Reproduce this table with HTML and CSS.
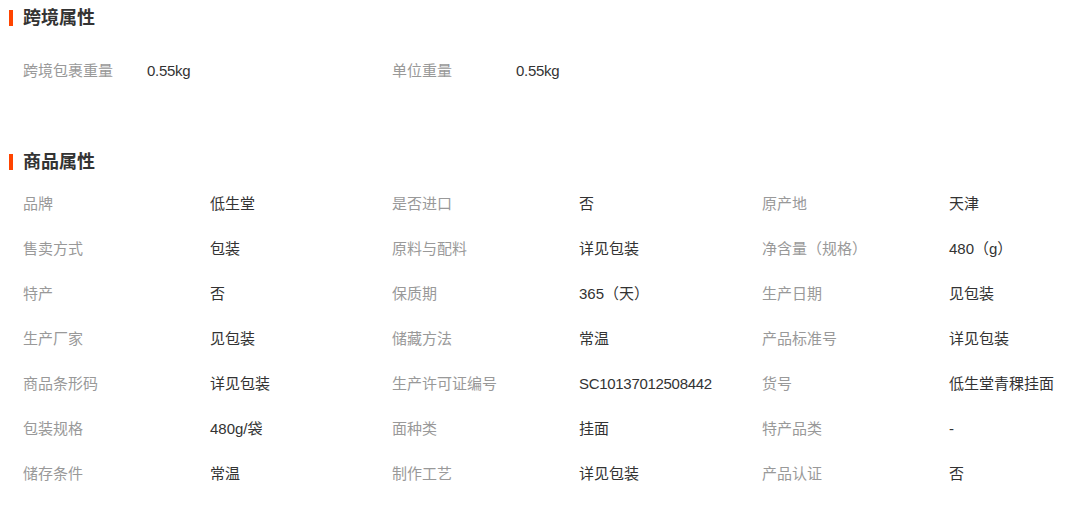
FILE: index.html
```html
<!DOCTYPE html>
<html lang="zh-CN">
<head>
    <meta charset="UTF-8">
    <title>商品属性</title>
    <link rel="stylesheet" href="styles.css">
</head>
<body>
    <div class="section">
        <h2 class="title">跨境属性</h2>
        <div class="attrs cross">
            <div class="item"><span class="label">跨境包裹重量</span><span class="value num">0.55kg</span></div>
            <div class="item"><span class="label">单位重量</span><span class="value num">0.55kg</span></div>
        </div>
    </div>

    <div class="section second">
        <h2 class="title">商品属性</h2>
        <div class="attrs goods">
            <div class="item"><span class="label">品牌</span><span class="value">低生堂</span></div>
            <div class="item"><span class="label">是否进口</span><span class="value">否</span></div>
            <div class="item"><span class="label">原产地</span><span class="value">天津</span></div>

            <div class="item"><span class="label">售卖方式</span><span class="value">包装</span></div>
            <div class="item"><span class="label">原料与配料</span><span class="value">详见包装</span></div>
            <div class="item"><span class="label">净含量（规格）</span><span class="value">480（g）</span></div>

            <div class="item"><span class="label">特产</span><span class="value">否</span></div>
            <div class="item"><span class="label">保质期</span><span class="value">365（天）</span></div>
            <div class="item"><span class="label">生产日期</span><span class="value">见包装</span></div>

            <div class="item"><span class="label">生产厂家</span><span class="value">见包装</span></div>
            <div class="item"><span class="label">储藏方法</span><span class="value">常温</span></div>
            <div class="item"><span class="label">产品标准号</span><span class="value">详见包装</span></div>

            <div class="item"><span class="label">商品条形码</span><span class="value">详见包装</span></div>
            <div class="item"><span class="label">生产许可证编号</span><span class="value num">SC10137012508442</span></div>
            <div class="item"><span class="label">货号</span><span class="value">低生堂青稞挂面</span></div>

            <div class="item"><span class="label">包装规格</span><span class="value">480g/袋</span></div>
            <div class="item"><span class="label">面种类</span><span class="value">挂面</span></div>
            <div class="item"><span class="label">特产品类</span><span class="value">-</span></div>

            <div class="item"><span class="label">储存条件</span><span class="value">常温</span></div>
            <div class="item"><span class="label">制作工艺</span><span class="value">详见包装</span></div>
            <div class="item"><span class="label">产品认证</span><span class="value">否</span></div>
        </div>
    </div>
</body>
</html>
```

FILE: styles.css
```css
* {
    margin: 0;
    padding: 0;
    box-sizing: border-box;
}

body {
    background: #fff;
    font-family: "Liberation Sans", "Noto Sans CJK SC", sans-serif;
    color: #333;
    overflow: hidden;
}

.section.second {
    margin-top: 51px;
}

.title {
    position: relative;
    height: 36px;
    line-height: 36px;
    padding-left: 23px;
    font-size: 18px;
    font-weight: bold;
    color: #333;
}

.title::before {
    content: "";
    position: absolute;
    left: 9px;
    top: 10px;
    width: 4px;
    height: 16px;
    background: #ff4400;
}

.attrs {
    display: grid;
    grid-template-columns: 369px 370px 1fr;
    padding-left: 23px;
}

.attrs.cross {
    margin-top: 12px;
}

.attrs.goods {
    margin-top: 1px;
}

.item {
    display: flex;
    height: 45px;
    line-height: 45px;
    font-size: 15px;
    white-space: nowrap;
}

.label {
    width: 187px;
    color: #999;
}

.cross .label {
    width: 124px;
}

.value {
    color: #333;
}

.value.num {
    letter-spacing: -0.3px;
}
```
